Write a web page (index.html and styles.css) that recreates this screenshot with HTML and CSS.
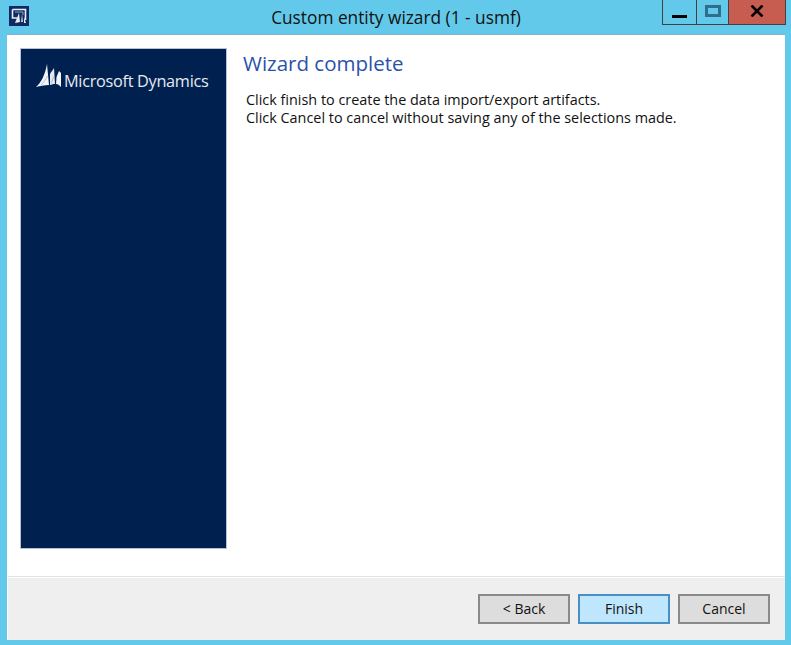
FILE: index.html
```html
<!DOCTYPE html>
<html lang="en">
<head>
<meta charset="utf-8">
<title>Custom entity wizard</title>
<link rel="stylesheet" href="styles.css">
</head>
<body>
<div class="window">
  <header class="titlebar">
    <svg class="app-icon" width="20" height="20" viewBox="0 0 20 20">
      <rect width="20" height="20" fill="#0f2a63"/>
      <path d="M3.500 3.500H16.500V14" fill="none" stroke="#e8eef5" stroke-width="1.6"/>
      <path d="M3.500 3.500V12H8" fill="none" stroke="#e8eef5" stroke-width="1.6"/>
      <path d="M6 6H14V9" fill="none" stroke="#8fa3c4" stroke-width="1"/>
      <path d="M6 17L10 7L11 16Z" fill="#e8eef5"/>
      <path d="M12 16L13 8L14 16Z" fill="#c8d3e4"/>
      <path d="M15 17V11L17 17Z" fill="#e8eef5"/>
    </svg>
    <div class="title">Custom entity wizard (1 - usmf)</div>
    <div class="controls">
      <div class="ctl ctl-min"><span class="min-glyph"></span></div>
      <div class="ctl ctl-max"><span class="max-glyph"></span></div>
      <div class="ctl ctl-close">
        <svg width="14" height="12" viewBox="0 0 14 12"><path d="M1.500 0.500L12.500 11.500M12.500 0.500L1.500 11.500" stroke="#000" stroke-width="2.6" fill="none"/></svg>
      </div>
    </div>
  </header>
  <div class="client">
    <main class="content">
      <aside class="sidebar">
        <div class="logo">
          <svg class="logo-mark" width="26" height="25" viewBox="0 0 26 25">
            <path d="M1 23C6 19 10 11 12 0L14 21C9 21 5 22 1 23Z" fill="#f2f5f9"/>
            <path d="M15 21L15 10C16 8 18 6 19 4L20 20C18 20 17 20.500 15 21Z" fill="#e4e9f1"/>
            <path d="M21 20L21.500 13L24 7L26 9V23C24 21 23 20 21 20Z" fill="#f2f5f9"/>
            <path d="M6 21C9 18 11 15 12.500 12M16 19.500C17 17 18 15 19 12" fill="none" stroke="#9fb0c8" stroke-width="0.8"/>
          </svg>
          <span class="logo-text">Microsoft Dynamics</span>
        </div>
      </aside>
      <section class="body">
        <h1 class="heading">Wizard complete</h1>
        <p class="message">Click finish to create the data import/export artifacts.<br>Click Cancel to cancel without saving any of the selections made.</p>
      </section>
    </main>
    <footer class="footer">
      <button class="btn" type="button">&lt; Back</button>
      <button class="btn btn-primary" type="button">Finish</button>
      <button class="btn" type="button">Cancel</button>
    </footer>
  </div>
</div>
</body>
</html>
```
FILE: styles.css
```css
html, body {
  margin: 0;
  padding: 0;
  height: 100%;
  overflow: hidden;
}
body {
  background: #63c9ea;
  font-family: "Open Sans", "Noto Sans", sans-serif;
  color: #111;
}
.window {
  width: 791px;
  height: 645px;
  display: flex;
  flex-direction: column;
  box-sizing: border-box;
  padding: 0 6px 5px 7px;
}
.titlebar {
  height: 35px;
  flex: none;
  box-sizing: border-box;
  border-bottom: 1px solid #7fb3cc;
  position: relative;
  display: flex;
  justify-content: center;
}
.app-icon {
  position: absolute;
  left: 2px;
  top: 6px;
}
.title {
  font-size: 17.3px;
  line-height: 20px;
  padding-top: 8px;
  color: #111;
}
.controls {
  position: absolute;
  right: -1px;
  top: 0;
  display: flex;
  height: 25px;
  box-sizing: border-box;
  border: 1px solid #44403f;
  border-top: none;
}
.ctl {
  display: flex;
  align-items: center;
  justify-content: center;
  box-sizing: border-box;
}
.ctl-min {
  width: 34px;
  border-right: 1px solid #44403f;
}
.ctl-max {
  width: 32px;
  border-right: 1px solid #44403f;
}
.ctl-close {
  width: 56px;
  background: #c75c50;
  padding-bottom: 2px;
}
.min-glyph {
  width: 15px;
  height: 3px;
  background: #000;
  margin-top: 9px;
}
.max-glyph {
  width: 16px;
  height: 12px;
  box-sizing: border-box;
  border: 3px solid #2e6e8c;
  margin-bottom: 2px;
}
.client {
  flex: 1;
  display: flex;
  flex-direction: column;
  background: #fff;
  min-height: 0;
}
.content {
  flex: 1;
  display: flex;
  padding: 13px 14px 0 13px;
  min-height: 0;
}
.sidebar {
  width: 207px;
  height: 501px;
  flex: none;
  box-sizing: border-box;
  background: #00214f;
  border: 1px solid #b7c3d3;
}
.logo {
  display: flex;
  align-items: flex-end;
  padding: 14px 0 0 14px;
  gap: 3px;
}
.logo-mark {
  flex: none;
  position: relative;
  top: 1px;
}
.logo-text {
  font-size: 16.3px;
  line-height: 20px;
  color: #e6ebf2;
  letter-spacing: -0.3px;
  white-space: nowrap;
  position: relative;
  top: 3px;
}
.body {
  flex: 1;
  padding: 1px 0 0 16px;
}
.heading {
  margin: 0;
  font-size: 20.500px;
  line-height: 28px;
  font-weight: 400;
  color: #2a52a8;
}
.message {
  margin: 14px 0 0 3px;
  font-size: 14.4px;
  line-height: 18px;
  color: #111;
}
.footer {
  height: 64px;
  flex: none;
  box-sizing: border-box;
  background: #efefef;
  border-top: 1px solid #dde3e8;
  box-shadow: inset 0 1px 0 #fff;
  margin-left: 1px;
  display: flex;
  justify-content: flex-end;
  align-items: flex-start;
  gap: 8px;
  padding: 17px 15px 0 0;
}
.btn {
  width: 92px;
  height: 30px;
  box-sizing: border-box;
  background: #dddddd;
  border: 2px solid #8a8a8a;
  font-family: inherit;
  font-size: 14px;
  color: #111;
  padding: 0 0 2px;
}
.btn-primary {
  background: #bee6fd;
  border-color: #4a8fc4;
}
```
